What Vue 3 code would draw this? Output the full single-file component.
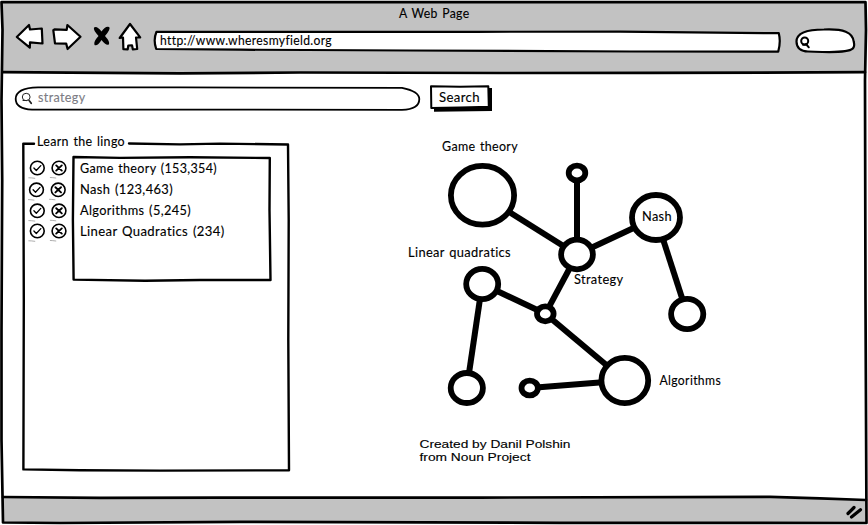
<script setup>
import { h } from 'vue'

// One line of text, set to an exact width; the baseline sits 13px below the top.
const SketchText = (props) =>
  h('svg', { class: 'sketch-text', width: props.width + 2, height: 18 }, [
    h('text', { x: 0, y: 13, textLength: props.width, lengthAdjust: 'spacingAndGlyphs' }, props.text),
  ])
SketchText.props = ['text', 'width']

const terms = [
  { text: 'Game theory (153,354)', width: 137, dx: 0.3, dy: 8 },
  { text: 'Nash (123,463)', width: 93, dx: -0.5, dy: 8.8 },
  { text: 'Algorithms (5,245)', width: 111, dx: 0.3, dy: 8.8 },
  { text: 'Linear Quadratics (234)', width: 144.5, dx: 0.3, dy: 8 },
]

const nodes = {
  game: { x: 482.5, y: 195.3, rx: 31.6, ry: 29.4 },
  top: { x: 577, y: 173, rx: 8.3, ry: 7.4 },
  strategy: { x: 577, y: 254.5, rx: 15.9, ry: 14.8 },
  nash: { x: 656, y: 217.5, rx: 24, ry: 22.5 },
  right: { x: 687.2, y: 314, rx: 16.1, ry: 15.1 },
  linear: { x: 482.2, y: 284, rx: 16, ry: 15.1 },
  mid: { x: 545.3, y: 313.8, rx: 8.3, ry: 7.5 },
  left: { x: 466.8, y: 388, rx: 16.1, ry: 15 },
  small: { x: 529.7, y: 388, rx: 8.2, ry: 7.4 },
  algo: { x: 624.8, y: 380.5, rx: 23.4, ry: 22.6 },
}

const edges = [
  ['game', 'strategy'], ['top', 'strategy'], ['nash', 'strategy'], ['nash', 'right'],
  ['strategy', 'mid'], ['linear', 'mid'], ['linear', 'left'], ['mid', 'algo'], ['small', 'algo'],
].map(([a, b]) => ({ a: nodes[a], b: nodes[b] }))

const labels = [
  { text: 'Game theory', x: 442, y: 151, w: 76 },
  { text: 'Linear quadratics', x: 408, y: 257, w: 103 },
  { text: 'Strategy', x: 574, y: 284, w: 49.5 },
  { text: 'Nash', x: 642, y: 221, w: 30 },
  { text: 'Algorithms', x: 659.5, y: 385, w: 61.5 },
]
</script>

<template>
  <div class="window">
    <svg class="layer" width="868" height="525" viewBox="0 0 868 525">
      <path class="chrome" d="M2 2H865V72.500H3ZM3 497.500H740L865 500V522H3Z" />
      <path class="frame" d="M1.500 2.200H865.500L866 30L865 80L865.500 300L866.500 523L560 522.800L240 521.800L60 523L3 522.500L1.500 440V330L2.200 180L1.500 100L2.500 30Z" />
      <path class="frame" d="M3 72.200L70 72.700L180 73.300L300 72.500L500 73L650 72.900L865 72.200M3 497L100 497.800L220 497.600H480L770 496.800L820 498.300L866 500" />
      <path class="grip" d="M848 513.500L854 507.500M851.500 517L860.500 509.800" />
    </svg>

    <div class="page">
      <header class="header">
        <div class="title"><SketchText text="A Web Page" :width="70.500" /></div>
        <nav class="toolbar">
          <svg width="32" height="32" viewBox="14 22 32 32">
            <path class="icon" d="M16.800 37L29 25L30 29.500L41.800 28.500L42.500 43.500L30 42.400L29.800 47.700Z" />
          </svg>
          <svg width="34" height="32" viewBox="51 22 34 32">
            <path class="icon" d="M53.300 30.200L54.500 29.400L66.700 29.800L67.400 25L80.500 36.800L67.600 49L66.200 43.600L55 43.400Z" />
          </svg>
          <svg width="22" height="32" viewBox="91 22 22 32">
            <path class="cross" d="M94 27.500Q97 25.500 101.500 31.500Q105.500 25.500 109.200 27Q111 29 105 36Q110.500 42 108.800 44.500Q106 46 101.500 40Q97.500 46.500 94.500 45Q93 42 98.500 36Q93 30 94 27.500Z" />
          </svg>
          <svg width="26" height="32" viewBox="117 22 26 32">
            <path class="icon" d="M130 24L140.200 37.300L136 37.500L137.200 49L132.800 49.300L132 45.300L128.300 45.500L127.700 49.300L123.400 49.200L123 37.500L119.700 38Z" />
          </svg>
          <div class="stack">
            <svg class="layer" width="630" height="32" viewBox="152 22 630 32">
              <path class="icon" d="M156.500 31.800L475 31.800L620 31.600L778.800 33.200Q781 42 778.200 51.700L630 51.500L410 50.500L240 49.700L156.200 49Q153 40 156.500 31.800Z" />
            </svg>
            <div class="url"><SketchText text="http://www.wheresmyfield.org" :width="172" /></div>
          </div>
          <svg width="63" height="32" viewBox="794 22 63 32">
            <path class="icon" d="M796.500 41.500C796.500 33 807 29.500 824 29.500C843 28.700 853 32 853.800 42C855.500 48.500 852 50 845 51.200C835 52.800 823 52 808 51.500C801 51.500 796.500 48 796.500 41.500Z" />
            <circle class="lens" cx="804.700" cy="41" r="3.500" />
            <path class="lens" d="M806 44L808.800 47.300M803 44.800H807" />
          </svg>
        </nav>
      </header>

      <div class="search">
        <div class="stack">
          <svg class="layer" width="410" height="30" viewBox="13 84 410 30">
            <path class="pill" d="M38 87.300L180 87.400L402 87.800C413 90 419.300 94 419.300 99C419.300 105 414 109.500 402 109.900L200 109.600L32 109.700C21 109 15.700 105 15.700 99C15.700 92.500 22 87.600 38 87.300Z" />
            <ellipse class="glass" cx="26.200" cy="97" rx="3.900" ry="3.700" />
            <path class="glass" d="M23 100.500H26.500M28.300 99.800L31.500 103.500" />
            <path class="handle" d="M29.500 101L31.200 103.200" />
          </svg>
          <div class="query"><SketchText text="strategy" :width="47.500" /></div>
        </div>
        <div class="stack">
          <svg class="layer" width="68" height="30" viewBox="428 84 68 30">
            <path d="M434 88H492V111L434 111.800Z" />
            <path class="button" d="M431 86.300L460 86.800L488.300 86.300L488.800 106.800L460 107.500L431.300 108Z" />
          </svg>
          <div class="caption"><SketchText text="Search" :width="41" /></div>
        </div>
      </div>

      <div class="content">
        <section class="stack">
          <svg class="layer" width="272" height="344" viewBox="20 130 272 344">
            <path class="box" d="M34 143.700L23.300 143.600L23.800 300L23.400 469.400L80 470.300L160 470.600L289 470.300L288.300 340L288.700 220L288 144.500L220 143.600L180 144.400L129 143.500" />
          </svg>
          <div class="panel">
            <SketchText class="legend" text="Learn the lingo" :width="88" />
            <div class="columns">
              <ul class="actions">
                <li v-for="t in terms" :key="t.text">
                  <svg width="44" height="21">
                    <g :transform="`translate(${t.dx} ${t.dy})`">
                      <ellipse class="ring" cx="9" cy="0" rx="6.900" ry="6.700" />
                      <path class="tick" d="M5.600 0L8 2.500L12.500 -2.400" />
                      <ellipse class="ring" cx="30.700" cy="0" rx="6.900" ry="6.700" />
                      <path class="times" d="M27.900 -2.600L33.500 2.600M33.500 -2.600L27.900 2.600" />
                      <path class="speck" d="M0.500 9.800L3 9.900L6.500 10.300M22 9.500L24 9.600L27.500 10" />
                    </g>
                  </svg>
                </li>
              </ul>
              <div class="stack">
                <svg class="layer" width="202" height="130" viewBox="71 154 202 130">
                  <path class="box" d="M73.500 157L120 157.900L190 157.200L269.800 158L269.500 210L270.500 280L200 280L145 280.700L73.600 279.600L72.900 220Z" />
                </svg>
                <ul class="terms">
                  <li v-for="t in terms" :key="t.text"><SketchText :text="t.text" :width="t.width" /></li>
                </ul>
              </div>
            </div>
          </div>
        </section>

        <svg class="graph" width="340" height="344" viewBox="400 130 340 344">
          <line v-for="(e, i) in edges" :key="i" :x1="e.a.x" :y1="e.a.y" :x2="e.b.x" :y2="e.b.y" />
          <ellipse v-for="(n, key) in nodes" :key="key" :cx="n.x" :cy="n.y" :rx="n.rx" :ry="n.ry" />
          <text v-for="l in labels" :key="l.text" :x="l.x" :y="l.y" :textLength="l.w" lengthAdjust="spacingAndGlyphs">{{ l.text }}</text>
          <text class="credit" x="419.500" y="448" textLength="151" lengthAdjust="spacingAndGlyphs">Created by Danil Polshin</text>
          <text class="credit" x="419.500" y="461" textLength="111" lengthAdjust="spacingAndGlyphs">from Noun Project</text>
        </svg>
      </div>
    </div>
  </div>
</template>

<style>
body {
  background: #fff;
}
.sketch-text {
  display: block;
  overflow: visible;
}
.sketch-text text,
.graph text {
  font: 12.5px Lato, "Open Sans", sans-serif;
  font-variant-ligatures: none;
  letter-spacing: 0.35px;
  word-spacing: 1px;
  fill: currentColor;
  stroke: currentColor;
  stroke-width: 0.12px;
}
</style>

<style scoped>
.window {
  display: grid;
  width: 868px;
  height: 525px;
  overflow: hidden;
  color: #000;
}
.window > *,
.stack > * {
  grid-area: 1 / 1;
}
.stack {
  display: grid;
  justify-items: start;
  align-items: start;
}
svg {
  display: block;
}
path {
  stroke-linejoin: round;
  stroke-linecap: round;
}
.page {
  display: flex;
  flex-direction: column;
}
.chrome {
  fill: #c2c2c2;
}
.frame {
  fill: none;
  stroke: #000;
  stroke-width: 2.7;
}
.grip {
  fill: none;
  stroke: #000;
  stroke-width: 3.2;
}
.header {
  height: 74px;
}
.title {
  display: flex;
  justify-content: center;
  height: 17px;
  padding: 5px 0 0 2px;
}
.toolbar {
  display: grid;
  grid-template-columns: 37px 40px 26px 35px 642px 63px;
  padding-left: 14px;
}
.icon {
  fill: #fff;
  stroke: #000;
  stroke-width: 2.2;
}
.cross {
  fill: #000;
}
.lens {
  fill: none;
  stroke: #000;
  stroke-width: 2;
}
.url {
  padding: 10px 0 0 8px;
}
.search {
  display: flex;
  gap: 5px;
  padding: 10px 0 0 13px;
}
.pill {
  fill: #fff;
  stroke: #000;
  stroke-width: 1.8;
}
.glass {
  fill: none;
  stroke: #222;
  stroke-width: 1;
}
.handle {
  stroke: #222;
  stroke-width: 1.8;
}
.query {
  padding: 5px 0 0 24.500px;
  color: #7c7c84;
}
.button {
  fill: #fff;
  stroke: #000;
  stroke-width: 2;
}
.caption {
  padding: 5px 0 0 11px;
}
.content {
  display: flex;
  gap: 108px;
  padding: 16px 0 0 20px;
}
.box {
  fill: none;
  stroke: #000;
  stroke-width: 2.4;
}
.panel {
  padding-top: 3px;
}
.legend {
  margin-left: 17px;
}
.columns {
  display: flex;
  padding: 3px 0 0 8px;
}
ul {
  list-style: none;
  margin: 0;
  padding: 0;
}
.actions {
  width: 43px;
  padding-top: 6px;
}
li {
  height: 21px;
}
.ring {
  fill: #fff;
  stroke: #000;
  stroke-width: 1.6;
}
.tick {
  fill: none;
  stroke: #000;
  stroke-width: 1.3;
}
.times {
  stroke: #000;
  stroke-width: 1.9;
}
.speck {
  fill: none;
  stroke: #777;
  stroke-width: 0.6;
}
.terms {
  padding: 6px 0 0 9px;
}
.graph line {
  stroke: #000;
  stroke-width: 6;
}
.graph ellipse {
  fill: #fff;
  stroke: #000;
  stroke-width: 5.8;
}
.graph .credit {
  font: 11px "Liberation Sans", Arial, sans-serif;
  letter-spacing: 0;
  word-spacing: 0;
}
</style>
